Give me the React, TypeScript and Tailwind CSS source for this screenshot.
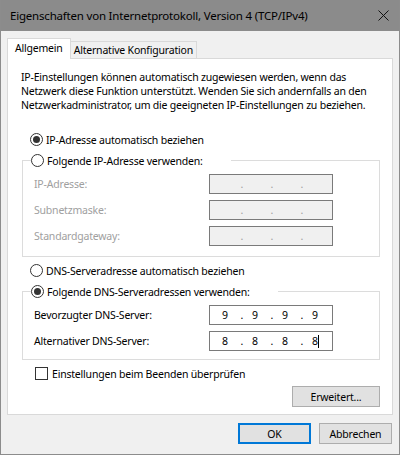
import React from 'react';

function Radio({ checked, label, disabled }: { checked?: boolean; label: string; disabled?: boolean }) {
  return (
    <div className="flex h-[17px] items-center">
      <span className="flex h-[13px] w-[13px] items-center justify-center rounded-full border border-[#333333] bg-white">
        {checked && <span className="h-[7px] w-[7px] rounded-full bg-[#333333]" />}
      </span>
      <span className={`ml-[3px] ${disabled ? 'text-[#a0a0a0]' : 'text-black'}`}>{label}</span>
    </div>
  );
}

function IpBox({ parts, disabled, caret }: { parts: string[]; disabled?: boolean; caret?: boolean }) {
  return (
    <div
      className={`flex h-[20px] w-[124px] items-center border pl-[3px] ${
        disabled ? 'border-[#7a7a7a] bg-[#f0f0f0] text-[#a0a0a0]' : 'border-[#7a7a7a] bg-white text-black'
      }`}
    >
      {parts.map((p, i) => (
        <React.Fragment key={i}>
          <span className="w-[24px] text-center">
            {p}
            {caret && i === 3 && <span className="-mr-px inline-block h-[13px] w-px bg-black align-middle" />}
          </span>
          {i < 3 && <span className="w-[6px] text-right">.</span>}
        </React.Fragment>
      ))}
    </div>
  );
}

function Row({ label, children, disabled }: { label: string; children: React.ReactNode; disabled?: boolean }) {
  return (
    <div className="flex items-center">
      <span className={`w-[178px] pl-[3px] ${disabled ? 'text-[#a0a0a0]' : 'text-black'}`}>{label}</span>
      {children}
    </div>
  );
}

export default function App() {
  return (
    <div className="flex h-[455px] w-[400px] flex-col overflow-hidden border-x border-b border-[#8c8c8c] bg-[#f0f0f0] font-['Noto_Sans',sans-serif] text-[10.5px] leading-[14px] tracking-[-0.2px] whitespace-nowrap text-black">
      {/* title bar */}
      <div className="flex h-[31px] shrink-0 items-center justify-between bg-[#8b8b8b] pl-[9px] pr-[10px]">
        <span className="text-[11.5px]">Eigenschaften von Internetprotokoll, Version 4 (TCP/IPv4)</span>
        <svg width="11" height="11" viewBox="0 0 11 11" fill="none" stroke="#111" strokeWidth={1}>
          <path d="M0.5 0.5 10.5 10.5M10.5 0.5 0.5 10.5" />
        </svg>
      </div>

      {/* tabs */}
      <div className="mt-[7px] ml-[6px] flex items-end">
        <div className="relative z-10 -mb-px flex h-[21px] items-center border-x border-t border-[#d9d9d9] bg-white px-[7px] pb-[2px]">
          Allgemein
        </div>
        <div className="flex h-[17px] items-center border-t border-r border-[#d9d9d9] bg-[#f0f0f0] px-[3px]">
          Alternative Konfiguration
        </div>
      </div>

      {/* panel */}
      <div className="mx-[6px] flex flex-col border border-[#d9d9d9] bg-white pt-[11px] pr-[12px] pb-[7px] pl-[14px]">
        <p className="-ml-px">
          IP-Einstellungen können automatisch zugewiesen werden, wenn das
          <br />
          Netzwerk diese Funktion unterstützt. Wenden Sie sich andernfalls an den
          <br />
          Netzwerkadministrator, um die geeigneten IP-Einstellungen zu beziehen.
        </p>

        <div className="mt-[19px] ml-[8px]">
          <Radio checked label="IP-Adresse automatisch beziehen" />
        </div>

        <fieldset className="mt-[4px] border border-[#dcdcdc] px-[8px] pb-[10px]">
          <legend className="pr-[28px]">
            <Radio label="Folgende IP-Adresse verwenden:" />
          </legend>
          <div className="mt-[5px] flex flex-col gap-[6px]">
            <Row label="IP-Adresse:" disabled>
              <IpBox parts={['', '', '', '']} disabled />
            </Row>
            <Row label="Subnetzmaske:" disabled>
              <IpBox parts={['', '', '', '']} disabled />
            </Row>
            <Row label="Standardgateway:" disabled>
              <IpBox parts={['', '', '', '']} disabled />
            </Row>
          </div>
        </fieldset>

        <div className="mt-[5px] ml-[8px]">
          <Radio label="DNS-Serveradresse automatisch beziehen" />
        </div>

        <fieldset className="mt-[4px] border border-[#dcdcdc] px-[8px] pb-[8px]">
          <legend className="pr-[28px]">
            <Radio checked label="Folgende DNS-Serveradressen verwenden:" />
          </legend>
          <div className="mt-[5px] flex flex-col gap-[6px]">
            <Row label="Bevorzugter DNS-Server:">
              <IpBox parts={['9', '9', '9', '9']} />
            </Row>
            <Row label="Alternativer DNS-Server:">
              <IpBox parts={['8', '8', '8', '8']} caret />
            </Row>
          </div>
        </fieldset>

        <div className="mt-[5px] ml-[13px] flex h-[17px] items-center">
          <span className="h-[13px] w-[13px] border border-[#333333] bg-white" />
          <span className="ml-[4px]">Einstellungen beim Beenden überprüfen</span>
        </div>

        <div className="mt-[4px] flex justify-end">
          <button className="h-[21px] w-[88px] border border-[#adadad] bg-[#e1e1e1]">Erweitert...</button>
        </div>
      </div>

      {/* dialog buttons */}
      <div className="mt-[8px] flex justify-end gap-[8px] pr-[7px]">
        <button className="h-[21px] w-[73px] border-2 border-[#0078d7] bg-[#e1e1e1]">OK</button>
        <button className="h-[21px] w-[73px] border border-[#adadad] bg-[#e1e1e1]">Abbrechen</button>
      </div>
    </div>
  );
}
